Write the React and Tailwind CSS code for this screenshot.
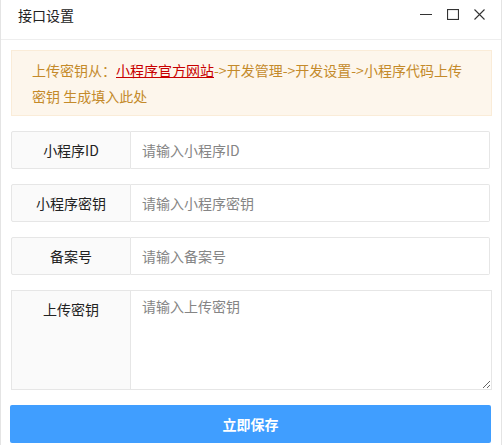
import React from "react";

const font = { fontFamily: '"Noto Sans CJK SC", "Noto Sans", sans-serif' };

function Row({ label, placeholder }) {
  return (
    <div className="flex w-[479px] h-[38px]">
      <div className="w-[120px] shrink-0 border border-[#e6e6e6] bg-[#fafafa] flex items-center justify-center text-[14px] text-[#222] rounded-l-[2px]">
        {label}
      </div>
      <input
        className="flex-1 min-w-0 border border-l-0 border-[#e6e6e6] bg-white pl-[11px] text-[14px] text-[#333] outline-none placeholder:text-[#858585] rounded-r-[2px]"
        placeholder={placeholder}
      />
    </div>
  );
}

export default function App() {
  return (
    <div
      className="w-[502px] h-[445px] bg-white border-l border-r border-[#e4e4e4] overflow-hidden"
      style={font}
    >
      <div className="h-[40px] border-b border-[#eeeeee] flex items-start justify-between pl-[17px] pr-[16px]">
        <span className="text-[14px] leading-[20px] mt-[5px] text-[#222]">接口设置</span>
        <div className="flex items-center gap-[15px] mt-[9px]">
          <svg width="12" height="11" viewBox="0 0 12 11">
            <line x1="0" y1="5.5" x2="12" y2="5.5" stroke="#333" strokeWidth="1" />
          </svg>
          <svg width="12" height="11" viewBox="0 0 12 11">
            <rect x="0.5" y="0.5" width="11" height="10" fill="none" stroke="#333" strokeWidth="1.2" />
          </svg>
          <svg width="11" height="11" viewBox="0 0 11 11">
            <path d="M0.5 0.5 L10.5 10.5 M10.5 0.5 L0.5 10.5" stroke="#333" strokeWidth="1.1" />
          </svg>
        </div>
      </div>

      <div className="flex flex-col items-start pl-[10px] pt-[10px]">
        <div className="w-[481px] h-[66px] border border-[#faecd8] bg-[#fdf6ec] px-[20px] py-[6px] text-[14px] leading-[26px] text-[#c48a2a]">
          上传密钥从：
          <a className="text-[#c80000] underline" href="#">小程序官方网站</a>
          -&gt;开发管理-&gt;开发设置-&gt;小程序代码上传密钥 生成填入此处
        </div>

        <div className="mt-[15px] flex flex-col gap-[15px]">
          <Row label="小程序ID" placeholder="请输入小程序ID" />
          <Row label="小程序密钥" placeholder="请输入小程序密钥" />
          <Row label="备案号" placeholder="请输入备案号" />
          <div className="flex w-[481px] h-[100px]">
            <div className="w-[120px] shrink-0 border border-[#e6e6e6] bg-[#fafafa] flex justify-center pt-[8px] leading-[20px] text-[14px] text-[#222]">
              上传密钥
            </div>
            <textarea
              className="flex-1 min-w-0 border border-l-0 border-[#e6e6e6] bg-white pl-[11px] pr-[10px] pt-[5px] pb-[6px] leading-[20px] text-[14px] text-[#333] outline-none placeholder:text-[#858585]"
              placeholder="请输入上传密钥"
            />
          </div>
        </div>

        <button className="mt-[15px] -ml-px w-[481px] h-[38px] rounded-[2px] bg-[#409eff] text-white text-[14px] font-bold flex items-center justify-center">
          立即保存
        </button>
      </div>
    </div>
  );
}
